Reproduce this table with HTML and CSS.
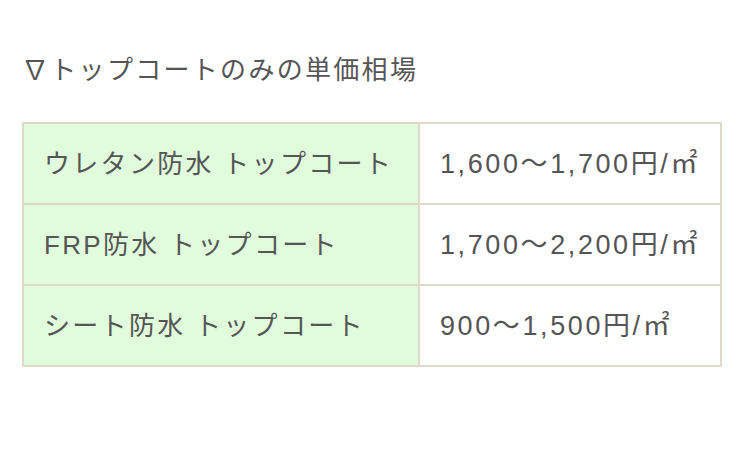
FILE: index.html
```html
<!DOCTYPE html>
<html lang="ja">
<head>
<meta charset="utf-8">
<link rel="stylesheet" href="styles.css">
</head>
<body>
<div class="page">
  <p class="title">∇トップコートのみの単価相場</p>
  <table class="price">
    <tr>
      <th>ウレタン防水 トップコート</th>
      <td>1,600〜1,700円/㎡</td>
    </tr>
    <tr>
      <th>FRP防水 トップコート</th>
      <td>1,700〜2,200円/㎡</td>
    </tr>
    <tr>
      <th>シート防水 トップコート</th>
      <td>900〜1,500円/㎡</td>
    </tr>
  </table>
</div>
</body>
</html>
```
FILE: styles.css
```css
html, body {
  margin: 0;
  padding: 0;
  background: #fff;
}
.page {
  padding: 52px 23px 0 22px;
  font-family: "Liberation Sans", "Noto Sans CJK JP", sans-serif;
  color: #555;
}
.title {
  margin: 0 0 34px 0;
  font-size: 26px;
  line-height: 36px;
  letter-spacing: 2.3px;
}
.price {
  width: 700px;
  border-collapse: collapse;
  font-size: 26px;
  letter-spacing: 2.3px;
}
.price th,
.price td {
  border: 2px solid #e0d9ca;
  height: 79px;
  padding: 0 0 0 20px;
  text-align: left;
  font-weight: normal;
  line-height: 36px;
}
.price th {
  width: 374px;
  background: #e0fcdc;
}
.price td {
  background: #fff;
  font-size: 27px;
  letter-spacing: 2.6px;
}
```
